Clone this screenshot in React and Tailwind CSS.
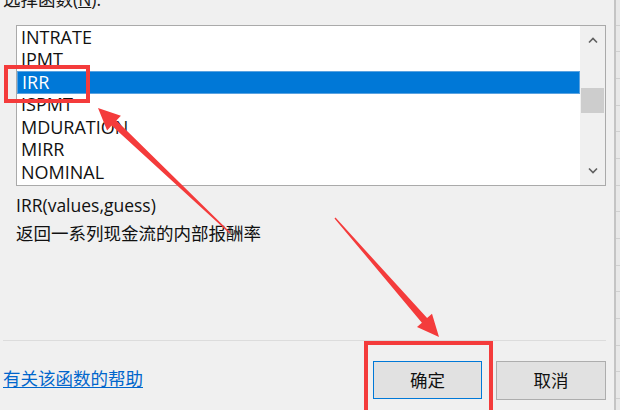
import React from "react";

const items = ["INTRATE", "IPMT", "IRR", "ISPMT", "MDURATION", "MIRR", "NOMINAL"];

function Chevron({ up }) {
  return (
    <svg width="10" height="7" viewBox="0 0 10 7">
      <path
        d={up ? "M1 5.5 L5 1.5 L9 5.5" : "M1 1.5 L5 5.5 L9 1.5"}
        fill="none"
        stroke="#606060"
        strokeWidth="1.6"
      />
    </svg>
  );
}

export default function App() {
  return (
    <div className="relative w-[620px] h-[410px] overflow-hidden bg-[#f0f0f0] flex font-['Open_Sans','Noto_Sans_CJK_SC',sans-serif] text-[#000]">
      <div className="w-[614px] flex flex-col">
        {/* label */}
        <div className="h-[25px] relative">
          <div className="pl-[3px] -mt-[13px] text-[17.5px] leading-[24px] text-[#1a1a1a]">
            选择函数(<span className="underline">N</span>):
          </div>
        </div>
        {/* listbox */}
        <div className="ml-[16px] w-[590px] h-[161px] border border-[#aaaaaa] bg-white flex">
          <div className="flex-1 flex flex-col">
            {items.map((it) => (
              <div
                key={it}
                className={
                  it === "IRR"
                    ? "h-[22.5px] flex items-center pl-[4px] text-[18px] bg-[#0078d7] text-white border border-[#5aa2e0]"
                    : "h-[22.5px] flex items-center pl-[4px] text-[18px] text-[#111]"
                }
              >
                {it}
              </div>
            ))}
          </div>
          <div className="w-[25px] bg-[#f0f0f0] flex flex-col items-center">
            <div className="h-[28px] flex items-center justify-center pt-[1px]">
              <Chevron up />
            </div>
            <div className="h-[34px]" />
            <div className="w-[23px] h-[25px] bg-[#cdcdcd]" />
            <div className="flex-1" />
            <div className="h-[28px] flex items-center justify-center pb-[2px]">
              <Chevron />
            </div>
          </div>
        </div>
        {/* description */}
        <div className="mt-[5px] pl-[16px] text-[17.5px] leading-[28px] text-[#111]">
          <div>IRR(values,guess)</div>
          <div>返回一系列现金流的内部报酬率</div>
        </div>
        <div className="flex-1" />
        {/* separator */}
        <div className="ml-[3px] w-[603px] h-px bg-[#dcdcdc]" />
        {/* bottom row */}
        <div className="h-[69px] flex items-start pt-[20px]">
          <a className="pl-[3px] mt-[3px] text-[17.5px] leading-[28px] text-[#0066cc] underline decoration-1 underline-offset-2">
            有关该函数的帮助
          </a>
          <div className="flex-1" />
          <button className="w-[109px] h-[38px] bg-[#e1e1e1] border border-[#0078d7] text-[17.5px] text-[#111] flex items-center justify-center">
            确定
          </button>
          <button className="ml-[14px] mr-[8px] w-[110px] h-[39px] bg-[#e1e1e1] border border-[#adadad] text-[17.5px] text-[#111] flex items-center justify-center">
            取消
          </button>
        </div>
      </div>
      {/* sheet strip behind */}
      <div className="flex-1 border-l-2 border-[#c4c4c4] bg-[#e8e8e8] bg-[repeating-linear-gradient(to_bottom,transparent_0px,transparent_25.67px,#d0d0d0_25.67px,#d0d0d0_26.67px)] bg-[position:0_-1px]" />

      {/* annotations */}
      <div className="absolute left-[4px] top-[65px] w-[86px] h-[38px] border-4 border-[#f43b3b]" />
      <div className="absolute left-[364px] top-[341px] w-[129px] h-[75px] border-4 border-[#f43b3b]" />
      <svg className="absolute left-0 top-0" width="620" height="410" viewBox="0 0 620 410">
        <polygon
          fill="#f43b3b"
          points="230.4,232.6 116.4,120.6 120.9,115.8 98,108 107.1,130.4 111.6,125.6 229.6,233.4"
        />
        <polygon
          fill="#f43b3b"
          points="335.5,217.6 427.1,318.1 432,313.8 439,337 417,327 421.9,322.7 334.5,218.4"
        />
      </svg>
    </div>
  );
}
